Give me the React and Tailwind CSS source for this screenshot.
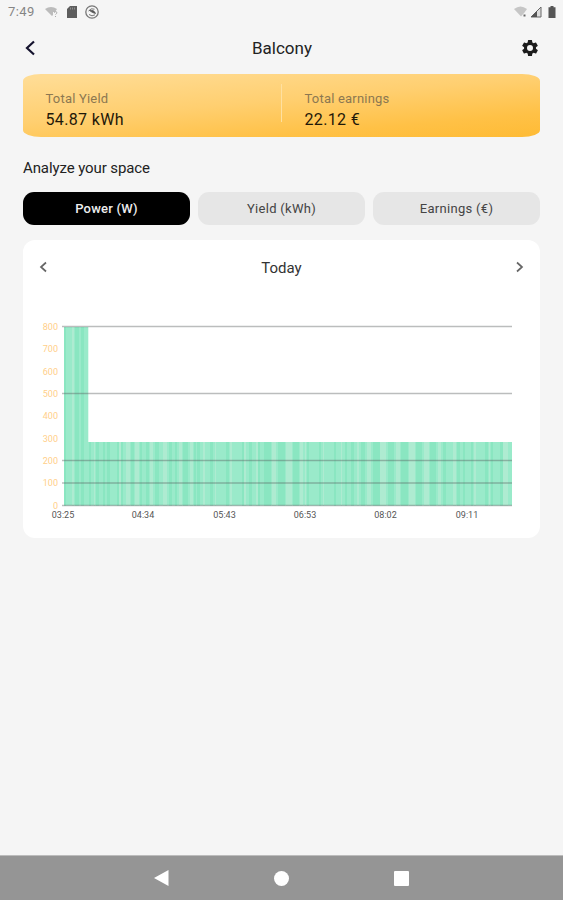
import React from "react";

const yLabels = [800, 700, 600, 500, 400, 300, 200, 100, 0];
const xLabels = [
  ["03:25", 63], ["04:34", 143], ["05:43", 224.5], ["06:53", 305], ["08:02", 385.5], ["09:11", 467],
];
const gridLines = [326.5, 393.5, 460.5, 483, 505.5];

// Overlapping samples: [x, width], darker and lighter stripes of the series
const dark = [
  [64, 2], [75, 4], [81, 3], [89, 2], [96, 3], [103, 2], [107, 3], [117, 2], [121, 2], [131, 3], [140, 2],
  [146, 3], [155, 4], [169, 3], [175, 2], [183, 5], [194, 2], [197, 3], [210, 3], [226, 3], [242, 2], [249, 3],
  [258, 2], [264, 7], [278, 7], [293, 6], [307, 2], [319, 2], [334, 2], [345, 2], [351, 3], [361, 4], [373, 7],
  [388, 6], [401, 7], [416, 6], [430, 6], [443, 3], [457, 3], [463, 2], [471, 2], [485, 3], [491, 2], [500, 3],
];
const light = [
  [72, 2], [94, 1], [119, 2], [126, 4], [135, 4], [150, 3], [163, 4], [179, 3], [190, 3], [203, 2], [215, 1],
  [230, 2], [244, 2], [256, 2], [272, 4], [286, 6], [300, 3], [305, 1], [323, 1], [341, 1],
  [357, 2], [367, 4], [380, 6], [396, 4], [409, 6], [424, 5], [438, 3], [453, 3], [474, 2], [489, 1],
  [503, 5],
];

function Chart() {
  const top = (x) => (x < 88 ? 327 : 442);
  return (
    <svg width="517" height="234" viewBox="23 304 517 234" className="block font-[Roboto,sans-serif]">
      <path d="M64 327H88.3V442H512V505.5H64Z" fill="#9aeaca" />
      {dark.map(([x, w]) => (
        <rect key={x} x={x} y={top(x)} width={w} height={505.5 - top(x)} fill="#84e4bd" opacity="0.75" />
      ))}
      {light.map(([x, w]) => (
        <rect key={x} x={x} y={top(x)} width={w} height={505.5 - top(x)} fill="#b0ebd2" opacity="0.9" />
      ))}
      {gridLines.map((y) => (
        <line key={y} x1="62" x2="512" y1={y} y2={y} stroke="#555b5b" strokeOpacity="0.4" strokeWidth="1.4" />
      ))}
      {yLabels.map((v) => (
        <text key={v} x="58" y={508.8 - v * 0.2237} fontSize="9" textAnchor="end" fill="#ffcf8a">{v}</text>
      ))}
      {xLabels.map(([t, x]) => (
        <text key={t} x={x} y="518" fontSize="9" textAnchor="middle" fill="#555">{t}</text>
      ))}
    </svg>
  );
}

function StatusBar() {
  return (
    <div className="flex h-6 items-center justify-between pl-2 pr-[7px] text-[#858585]">
      <div className="flex items-center">
        <span className="w-[37px] text-[13px] leading-6 tracking-[0.4px]">7:49</span>
        <svg width="14" height="12" viewBox="0 0 14 12">
          <path d="M0 3Q6 -1 12 3L10 6H8V9L7 10Z" fill="#bbb" />
          <path d="M9 6.5q2-2 3 0q0 1-1.5 2M10.5 10v1" fill="none" stroke="#aaa" />
        </svg>
        <svg width="12" height="12" viewBox="0 0 12 12" className="ml-[7px]">
          <path d="M4 0H11V12H1V3Z" fill="#5d5d5d" />
          <path d="M4.5 1.5v2M6.5 1.5v2M8.5 1.5v2" stroke="#999" strokeWidth=".8" />
        </svg>
        <svg width="14" height="14" viewBox="0 0 14 14" className="ml-[7px]" fill="none" stroke="#777">
          <circle cx="7" cy="7" r="6.2" strokeWidth="1.3" />
          <path d="M3.5 6Q6 2.5 9.5 4.2M4 9.5Q7 12 10 9.8" />
          <path d="M4.5 5.5Q9 4.5 10.5 8.5L7.5 7.5Z" fill="#555" stroke="#555" strokeWidth=".8" />
        </svg>
      </div>
      <div className="flex items-center">
        <svg width="14" height="12" viewBox="0 0 14 12">
          <path d="M0 3Q6.5 -2 13 3L10.5 6.5L7 10.5Z" fill="#c6c6c6" />
          <path d="M10.5 8.5v2" stroke="#666" strokeWidth="2" />
        </svg>
        <svg width="12" height="12" viewBox="0 0 12 12" className="ml-[2px]">
          <path d="M1 11L11 1V11Z" fill="#ddd" stroke="#666" />
          <path d="M1 11L7 5V11Z" fill="#555" />
        </svg>
        <svg width="8" height="12" viewBox="0 0 8 12" className="ml-[6px]">
          <path d="M2.5 0H5.5V1.2H7.5V12H.5V1.2H2.5Z" fill="#555" />
        </svg>
      </div>
    </div>
  );
}

function Stat({ label, value }) {
  return (
    <div className="flex-1 pl-[22.5px] pt-[17px]">
      <div className="text-[13px] leading-4 tracking-[0.2px] text-[#8c7851]">{label}</div>
      <div className="mt-[3px] text-base leading-5 tracking-[0.35px] text-[#1f1808]">{value}</div>
    </div>
  );
}

export default function App() {
  const tab = "flex h-[33px] flex-1 items-center justify-center rounded-[11px] text-[13px] pt-px";
  return (
    <div className="flex h-[900px] w-[563px] flex-col overflow-hidden bg-[#f5f5f5] font-[Roboto,sans-serif] text-[#222]">
      <StatusBar />
      <header className="grid h-12 grid-cols-[1fr_auto_1fr] items-center pl-[25px] pr-[24px]">
        <svg width="12" height="16" viewBox="1 0 12 16" fill="none" stroke="#15132e" strokeWidth="2.2">
          <path d="M10 1.5L3 8L10 14.5" />
        </svg>
        <h1 className="text-[17px] leading-6">Balcony</h1>
        <svg width="20" height="20" viewBox="0 0 24 24" fill="#1c1c1c" className="mr-[-1px] justify-self-end">
          <path d="M19.14 12.94c.04-.3.06-.61.06-.94 0-.32-.02-.64-.07-.94l2.03-1.58a.49.49 0 0 0 .12-.61l-1.92-3.32a.49.49 0 0 0-.59-.22l-2.39.96a7 7 0 0 0-1.62-.94l-.36-2.54a.48.48 0 0 0-.48-.41h-3.84a.48.48 0 0 0-.47.41l-.36 2.54a7.4 7.4 0 0 0-1.62.94l-2.39-.96a.48.48 0 0 0-.59.22L2.74 8.87a.48.48 0 0 0 .12.61l2.03 1.58a6 6 0 0 0 0 1.88l-2.03 1.58a.49.49 0 0 0-.12.61l1.92 3.32c.12.22.37.29.59.22l2.39-.96c.5.38 1.03.7 1.62.94l.36 2.54c.05.24.24.41.48.41h3.84c.24 0 .44-.17.47-.41l.36-2.54a7.4 7.4 0 0 0 1.62-.94l2.39.96c.22.08.47 0 .59-.22l1.92-3.32a.48.48 0 0 0-.12-.61zM12 15.6a3.6 3.6 0 1 1 0-7.2 3.6 3.6 0 0 1 0 7.2z" />
        </svg>
      </header>
      <main className="flex flex-1 flex-col px-[23px] pt-[2px]">
        <section className="flex h-[63px] rounded-[18px/7px] bg-[linear-gradient(175deg,#ffdc94_5%,#ffcf70_45%,#ffc146_78%,#febb35_100%)]">
          <Stat label="Total Yield" value="54.87 kWh" />
          <div className="mt-[10px] h-[38px] w-px bg-[#ffe0a0]" />
          <Stat label="Total earnings" value="22.12 €" />
        </section>
        <h2 className="mt-5 text-[15px] leading-[22px] tracking-[-0.1px]">Analyze your space</h2>
        <div className="mt-[13px] flex gap-2">
          <button className={`${tab} bg-black font-medium tracking-[0.2px] text-[#eee]`}>Power (W)</button>
          <button className={`${tab} bg-[#e6e6e6] tracking-[0.3px] text-[#444]`}>Yield (kWh)</button>
          <button className={`${tab} bg-[#e6e6e6] tracking-[0.3px] text-[#444]`}>Earnings (€)</button>
        </div>
        <section className="mt-[15px] h-[298px] overflow-hidden rounded-[12px] bg-white">
          <div className="flex h-16 items-start justify-between px-4 pt-[17px] text-[#666]">
            <svg width="9" height="20" viewBox="0 0 9 20" fill="none" stroke="currentColor" strokeWidth="1.7">
              <path d="M7 5.5L2 10L7 14.5" />
            </svg>
            <span className="text-[15px] leading-[22px] text-[#333]">Today</span>
            <svg width="9" height="20" viewBox="0 0 9 20" fill="none" stroke="currentColor" strokeWidth="1.7">
              <path d="M2 5.5L7 10L2 14.5" />
            </svg>
          </div>
          <Chart />
        </section>
      </main>
      <nav className="flex h-[45px] items-center justify-center gap-[105px] border-t border-[#bcbcbc] bg-[#959595]">
        <svg width="15" height="16" viewBox="0 0 15 16" fill="white"><path d="M0 8L14.5 0V16Z" /></svg>
        <div className="h-[15px] w-[15px] rounded-full bg-white" />
        <div className="h-[15px] w-[15px] rounded-[1px] bg-white" />
      </nav>
    </div>
  );
}
